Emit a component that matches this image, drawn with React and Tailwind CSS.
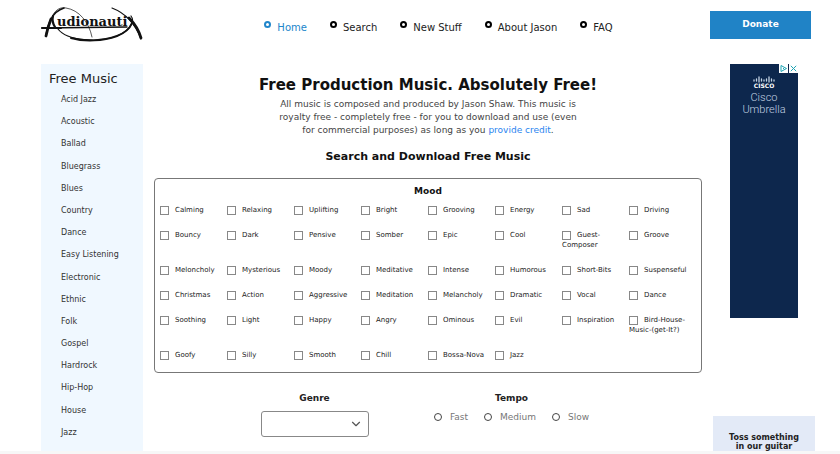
import { ChevronDown } from 'lucide-react'

const navItems = ['Home', 'Search', 'New Stuff', 'About Jason', 'FAQ']

const genres = [
  'Acid Jazz', 'Acoustic', 'Ballad', 'Bluegrass', 'Blues', 'Country', 'Dance', 'Easy Listening',
  'Electronic', 'Ethnic', 'Folk', 'Gospel', 'Hardrock', 'Hip-Hop', 'House', 'Jazz',
]

const moods = [
  'Calming', 'Relaxing', 'Uplifting', 'Bright', 'Grooving', 'Energy', 'Sad', 'Driving',
  'Bouncy', 'Dark', 'Pensive', 'Somber', 'Epic', 'Cool', 'Guest-Composer', 'Groove',
  'Meloncholy', 'Mysterious', 'Moody', 'Meditative', 'Intense', 'Humorous', 'Short-Bits', 'Suspenseful',
  'Christmas', 'Action', 'Aggressive', 'Meditation', 'Melancholy', 'Dramatic', 'Vocal', 'Dance',
  'Soothing', 'Light', 'Happy', 'Angry', 'Ominous', 'Evil', 'Inspiration', 'Bird-House-Music-(get-It?)',
  'Goofy', 'Silly', 'Smooth', 'Chill', 'Bossa-Nova', 'Jazz',
]

const tempos = ['Fast', 'Medium', 'Slow']

const Logo = () => (
  <svg viewBox="0 -2 102 36" className="block w-[102px] h-9" role="img" aria-label="Audionautix">
    <g fill="none" stroke="#111" strokeLinecap="round">
      <path d="M12 7 C15 1 20 -1 25 0 C38 2 48 14 51 29" strokeWidth="0.7" />
      <path d="M5 27 C7 17 10 4 23 0" strokeWidth="1.6" />
      <path d="M5 28 C6 23 8 16 10 11" strokeWidth="2.8" />
      <path d="M12 8 C11 12 12 16 14 19" strokeWidth="2.2" />
      <path d="M1 20 L86 19" strokeWidth="1.4" />
      <path d="M1 20 L20 20" strokeWidth="2" />
      <path d="M17 21 C26 33 58 35 76 28 C90 22 94 13 90 8" strokeWidth="1.2" />
      <path d="M30 30 C44 34 62 33 76 28 C84 25 89 20 91 15" strokeWidth="2" />
      <path d="M71 0 C84 5 94 15 100 31" strokeWidth="1.2" />
      <path d="M88 10 C94 16 98 23 100 30" strokeWidth="2.8" />
    </g>
    <text x="16" y="18" fontSize="13" fontWeight="700" fill="#111" fontFamily="'DejaVu Serif', serif">
      udionauti
    </text>
  </svg>
)

const Header = () => (
  <header className="flex items-start pt-1.5">
    <a href="#home" className="shrink-0">
      <Logo />
    </a>
    <nav className="flex-1 flex justify-center pt-[15px] pl-6">
      <ul className="flex gap-[23px]">
        {navItems.map((item, i) => (
          <li key={item}>
            <a
              href="#nav"
              className={`flex gap-1.5 text-[10px] leading-[14px] whitespace-nowrap ${i === 0 ? 'text-[#2186cb]' : 'text-[#222]'}`}
            >
              <span className={`size-[7px] rounded-full border-2 ${i === 0 ? 'border-[#2186cb]' : 'border-black'}`} />
              {item}
            </a>
          </li>
        ))}
      </ul>
    </nav>
    <button className="mt-[5px] mr-1 w-[101px] h-7 shrink-0 bg-[#2083c6] text-white text-[9px] font-bold">
      Donate
    </button>
  </header>
)

const Sidebar = () => (
  <aside className="w-[102px] shrink-0 flex flex-col bg-[#f0f8ff] pt-2 pb-[11px] pl-2">
    <h2 className="text-[13px] leading-[14px] text-[#222]">Free Music</h2>
    <ul className="flex-1 flex flex-col justify-between pt-[7px] pl-3">
      {genres.map(genre => (
        <li key={genre} className="text-[8px] leading-[14px] text-[#333]">
          <a href="#genre">{genre}</a>
        </li>
      ))}
    </ul>
  </aside>
)

const MoodBox = () => (
  <fieldset className="mt-[13px] rounded-[4px] border border-[#777] px-[5px] pt-1.5 pb-3">
    <h3 className="text-center text-[9px] leading-[12px] font-bold text-[#111]">Mood</h3>
    <div className="mt-2 grid grid-cols-8 gap-y-[15px]">
      {moods.map((mood, i) => (
        <label key={i} className="text-[7px] leading-[10px] text-[#222]">
          <input
            type="checkbox"
            className="appearance-none inline-block size-[9px] mr-1.5 -my-1 align-middle border border-[#888] bg-white"
          />
          {mood}
        </label>
      ))}
    </div>
  </fieldset>
)

const Filters = () => (
  <div className="mt-[18px] flex pl-[62px]">
    <div className="w-[197px] flex flex-col items-center">
      <label htmlFor="genre" className="text-[9px] leading-[14px] font-bold text-[#222]">Genre</label>
      <div className="relative mt-1.5">
        <select id="genre" className="appearance-none block w-[108px] h-[26px] rounded-[3px] border border-[#888] bg-white">
          <option value="" />
        </select>
        <ChevronDown className="absolute right-1.5 top-1.5 size-3.5 text-[#555] pointer-events-none" strokeWidth={2} />
      </div>
    </div>
    <fieldset className="w-[197px] text-center">
      <legend className="w-full text-[9px] leading-[14px] font-bold text-[#222]">Tempo</legend>
      <div className="mt-1.5 flex justify-center gap-4">
        {tempos.map(tempo => (
          <label key={tempo} className="flex items-center gap-2 text-[9px] leading-[12px] text-[#777]">
            <input type="radio" name="tempo" className="appearance-none size-2 rounded-full border border-[#444]" />
            {tempo}
          </label>
        ))}
      </div>
    </fieldset>
  </div>
)

const CiscoAd = () => (
  <a href="#ad" className="relative ml-[17px] w-[68px] h-[254px] bg-[#0d274d] flex flex-col items-center pt-3 text-[#c3d2e3]">
    <span className="absolute top-0 right-0 flex gap-px">
      <svg viewBox="0 0 9 9" className="size-[9px] bg-white" fill="none" stroke="#1fa5b5">
        <path d="M2 1.5 L7.5 4.5 L2 7.5 Z M4 4.5 H5" />
      </svg>
      <svg viewBox="0 0 9 9" className="size-[9px] bg-white" fill="none" stroke="#1fa5b5">
        <path d="M1.8 1.8 L7.2 7.2 M7.2 1.8 L1.8 7.2" />
      </svg>
    </span>
    <svg viewBox="0 0 22 7" className="w-[22px] h-[7px]" stroke="currentColor" strokeWidth="1.3" strokeLinecap="round">
      <path d="M1 4V5 M3.5 3V5 M6 1V6 M8.5 3V5 M11 4V5 M13.5 3V5 M16 1V6 M18.5 3V5 M21 4V5" />
    </svg>
    <span className="text-[6px] leading-[6px] font-bold text-white">CISCO</span>
    <span className="mt-[3px] text-center font-['Roboto',sans-serif] font-light text-[11px] leading-[12px]">
      Cisco
      <br />
      Umbrella
    </span>
  </a>
)

const App = () => (
  <div className="min-h-screen flex flex-col bg-white pl-[41px] pr-[25px] font-['DejaVu_Sans',Verdana,sans-serif]">
    <Header />
    <div className="flex-1 flex pt-[22px]">
      <Sidebar />
      <main className="flex-1 min-w-0 mx-[11px] pt-[11px]">
        <h1 className="text-center text-[15px] leading-[20px] font-bold text-[#111]">
          Free Production Music. Absolutely Free!
        </h1>
        <p className="mx-auto mt-[3px] w-[300px] text-center text-[9px] leading-[13px] text-[#444]">
          All music is composed and produced by Jason Shaw. This music is royalty free - completely free - for you to
          download and use (even for commercial purposes) as long as you{' '}
          <a href="#credit" className="text-[#2a84f0]">provide credit</a>.
        </p>
        <h2 className="mt-3 text-center text-[11px] leading-[16px] font-bold text-[#111]">
          Search and Download Free Music
        </h2>
        <MoodBox />
        <Filters />
      </main>
      <div className="w-[102px] shrink-0 flex flex-col justify-between">
        <CiscoAd />
        <a
          href="#tip"
          className="bg-[#e3eaf7] pt-[17px] text-center text-[8px] leading-[9px] font-bold text-[#222]"
        >
          Toss something
          <br />
          in our guitar
        </a>
      </div>
    </div>
    <div className="-ml-[41px] -mr-[25px] h-[3px] bg-[#f7f7f7]" />
  </div>
)

export default App
